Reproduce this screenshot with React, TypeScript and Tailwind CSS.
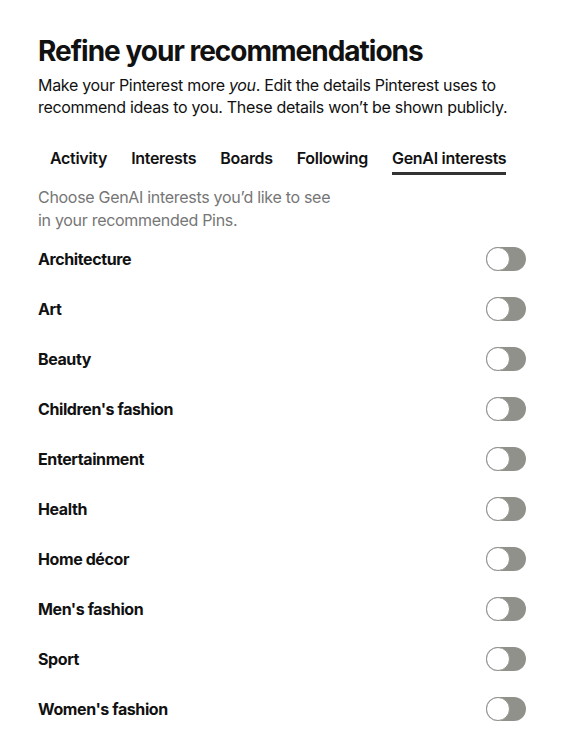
import React from "react";

const items = [
  "Architecture",
  "Art",
  "Beauty",
  "Children's fashion",
  "Entertainment",
  "Health",
  "Home décor",
  "Men's fashion",
  "Sport",
  "Women's fashion",
];

const tabs = ["Activity", "Interests", "Boards", "Following", "GenAI interests"];

function Toggle() {
  return (
    <div className="relative h-[24px] w-[40px] rounded-full bg-[#91918c]">
      <div className="absolute left-0 top-0 h-[24px] w-[24px] rounded-full border border-[#91918c] bg-white" />
    </div>
  );
}

export default function App() {
  return (
    <div className="min-h-[743px] bg-white px-[38px] pt-[33px] text-[#111]" style={{ fontFamily: "Inter, 'Noto Sans', sans-serif" }}>
      <h1 className="text-[28px] font-bold leading-[36px] tracking-[-1px]">Refine your recommendations</h1>
      <p className="mt-[5px] text-[16px] leading-[22px] tracking-[-0.3px]">
        Make your Pinterest more <i>you</i>. Edit the details Pinterest uses to recommend ideas to you. These details won’t be shown publicly.
      </p>
      <div className="mt-[29px] flex gap-[24px] pl-[12px]">
        {tabs.map((t, i) => (
          <div key={t} className="flex flex-col">
            <span className="text-[16px] font-semibold leading-[22px] tracking-[-0.3px]">{t}</span>
            <div className={"mt-[3px] h-[3px] " + (i === 4 ? "bg-[#333]" : "bg-transparent")} />
          </div>
        ))}
      </div>
      <p className="mt-[11px] w-[298px] text-[16px] leading-[23px] tracking-[-0.3px] text-[#767676]">
        Choose GenAI interests you’d like to see in your recommended Pins.
      </p>
      <div className="mt-[2px] flex flex-col">
        {items.map((it) => (
          <div key={it} className="flex h-[50px] items-center justify-between">
            <span className="text-[16px] font-bold tracking-[-0.4px]">{it}</span>
            <Toggle />
          </div>
        ))}
      </div>
    </div>
  );
}
